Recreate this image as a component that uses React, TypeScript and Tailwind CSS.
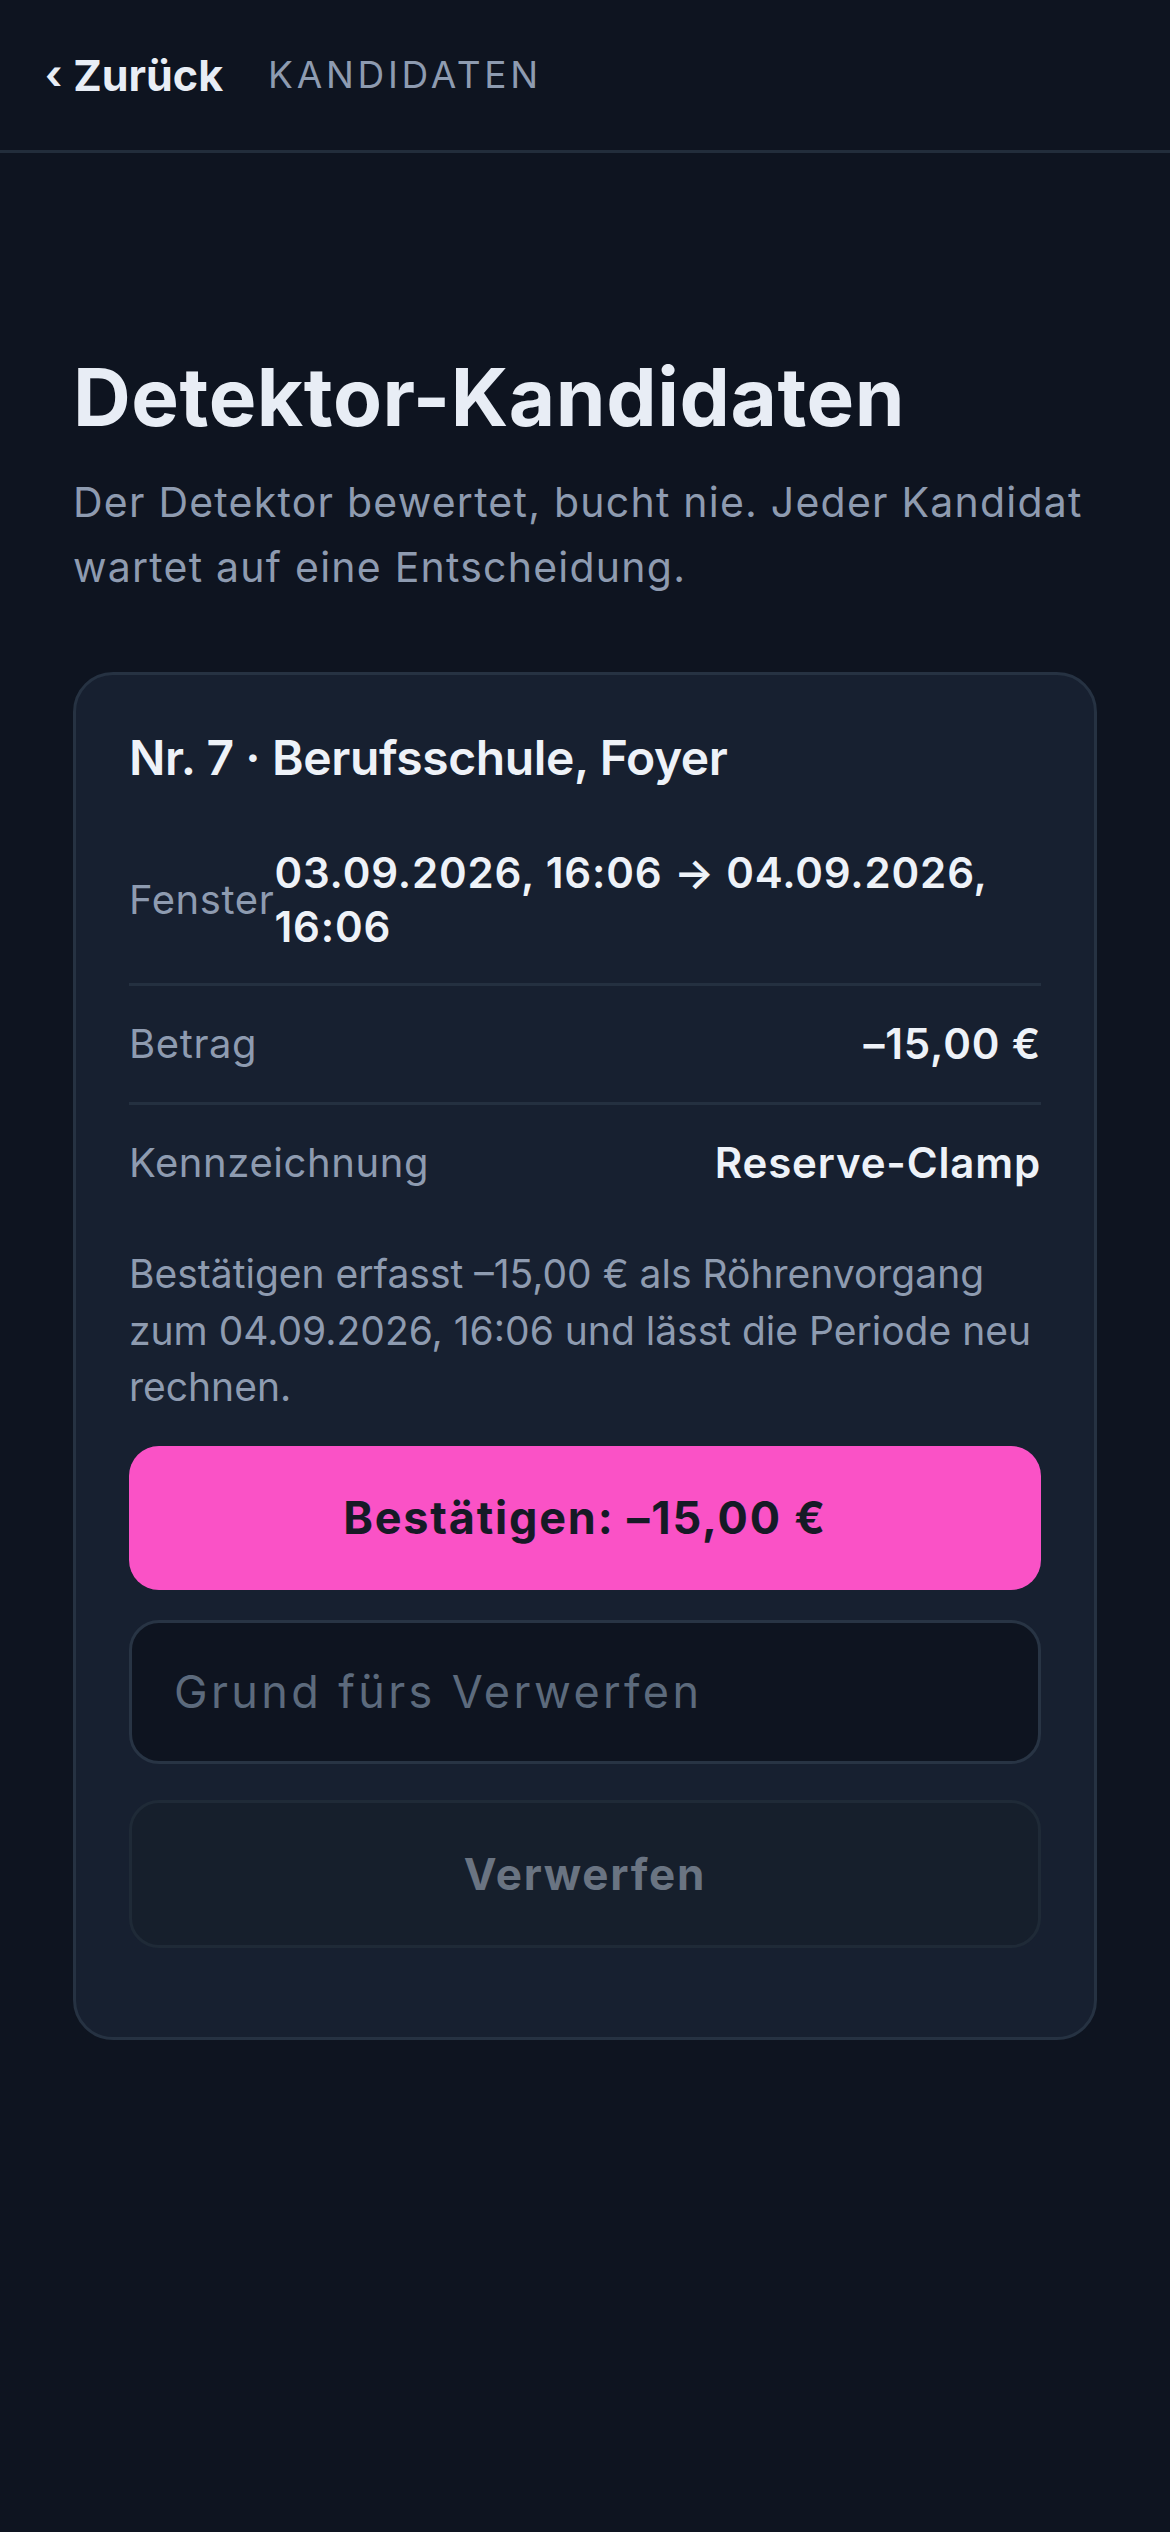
import React from "react";

const Row = ({
  label,
  value,
  divider = true,
}: {
  label: string;
  value: string;
  divider?: boolean;
}) => (
  <div
    className={`flex items-center justify-between py-[29px] ${
      divider ? "border-b-[3px] border-[#243040]" : ""
    }`}
  >
    <span className="shrink-0 text-[40px] leading-[58px] tracking-[0.015em] text-[#8e9bb0]">
      {label}
    </span>
    <span className="text-[42px] leading-[54px] font-semibold tracking-[0.02em] text-[#eef2f8]">
      {value}
    </span>
  </div>
);

const App = () => {
  return (
    <div
      className="min-h-screen bg-[#0e1420] text-[#e8edf5]"
      style={{ fontFamily: "Inter, 'Noto Sans', sans-serif" }}
    >
      {/* Header */}
      <header className="flex h-[153px] items-center border-b-[3px] border-[#222d3b] pl-[45px]">
        <a className="flex items-center text-[43px] font-bold text-[#e8edf5]">
          <span className="mr-[11px] text-[40px] leading-none">‹</span>
          <span>Zurück</span>
        </a>
        <span className="ml-[45px] text-[37px] tracking-[0.1em] text-[#8e9bb0]">KANDIDATEN</span>
      </header>

      <main className="px-[73px] pt-[196px]">
        <h1 className="text-[80px] font-bold leading-[96px] tracking-[0.007em] text-[#e8edf5]">
          Detektor-Kandidaten
        </h1>
        <p className="mt-[25px] text-[41px] leading-[65px] tracking-[0.03em] text-[#8e9bb0]">
          Der Detektor bewertet, bucht nie. Jeder Kandidat wartet auf eine Entscheidung.
        </p>

        {/* Candidate card */}
        <section className="mt-[72px] rounded-[40px] border-[3px] border-[#263242] bg-[#172030] px-[53px] pt-[53px] pb-[89px]">
          <h2 className="mb-[29px] text-[48px] font-semibold leading-[60px] tracking-[-0.008em] text-[#eef2f8]">
            Nr. 7 · Berufsschule, Foyer
          </h2>

          <Row label="Fenster" value="03.09.2026, 16:06 → 04.09.2026, 16:06" />
          <Row label="Betrag" value="–15,00 €" />
          <Row label="Kennzeichnung" value="Reserve-Clamp" divider={false} />

          <p className="mt-[25px] text-[39px] leading-[56.5px] text-[#8e9bb0]">
            Bestätigen erfasst –15,00 € als Röhrenvorgang zum 04.09.2026, 16:06 und lässt die Periode
            neu rechnen.
          </p>

          <button className="mt-[30px] flex h-[144px] w-full items-center justify-center rounded-[30px] bg-[#fa52c6] text-[45px] font-bold tracking-[0.04em] text-[#161a26]">
            Bestätigen: –15,00 €
          </button>

          <input
            className="mt-[30px] h-[144px] w-full rounded-[30px] border-[3px] border-[#283444] bg-[#0e1420] px-[42px] text-[45px] tracking-[0.075em] text-[#e8edf5] placeholder:text-[#5c6a7c] outline-none"
            placeholder="Grund fürs Verwerfen"
          />

          <button
            disabled
            className="mt-[36px] flex h-[148px] w-full items-center justify-center rounded-[30px] border-[3px] border-[#1f2a37] bg-[#161f2c] text-[44px] font-bold tracking-[0.04em] text-[#6a7482]"
          >
            Verwerfen
          </button>
        </section>
      </main>
    </div>
  );
};

export default App;
